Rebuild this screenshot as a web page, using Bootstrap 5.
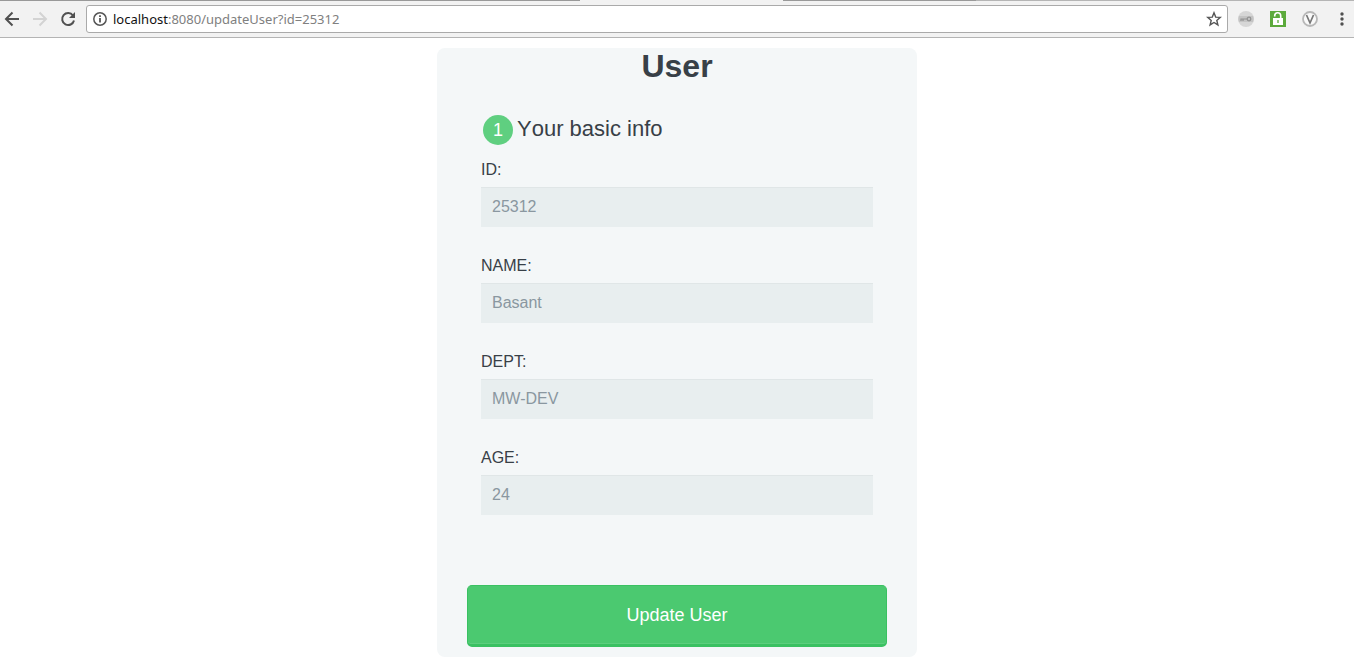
<!DOCTYPE html>
<html lang="en">
<head>
<meta charset="utf-8">
<meta name="viewport" content="width=device-width, initial-scale=1">
<title>User</title>
<link href="https://cdn.jsdelivr.net/npm/bootstrap@5.3.0/dist/css/bootstrap.min.css" rel="stylesheet">
<style>
  body { font-family: "Liberation Sans", Arial, sans-serif; color: #384047; }
  .browser-bar { height: 38px; padding: 0 4px; background: linear-gradient(90deg, #999 42.8%, #f2f2f2 42.8% 57.8%, #999 57.8% 72.1%, #b5b5b5 72.1%) top / 100% 1px no-repeat #f2f2f2; border-bottom: 1px solid #b4b4b4; }
  .tool-btn { width: 16px; height: 16px; }
  .tool-btn svg, .omnibox svg { display: block; }
  .omnibox { height: 28px; margin-left: 10px; padding: 0 5px; border: 1px solid #aaa; border-radius: 3px; }
  .address { margin-left: 5px; font: 13px/18px "Noto Sans", "Open Sans", sans-serif; color: #808080; }
  .address b { font-weight: 400; color: #111; }
  .extensions { gap: 16px; margin-left: 10px; }
  .user-form { max-width: 480px; margin: 10px auto; padding: 0 30px 10px; background: #f4f7f8; border-radius: 8px; }
  .user-form h1 { margin: 0 0 31px; font-size: 32px; line-height: 36px; font-weight: 700; text-align: center; }
  .user-form fieldset { padding: 0 14px; margin-bottom: 40px; }
  .user-form legend { margin: 0 0 16px; padding: 0 2px; font-size: 22px; line-height: 30px; font-kerning: none; }
  .step-no { width: 30px; height: 30px; margin-right: 4px; background: #5fcf80; color: #fff; font-size: 18px; border-radius: 50%; }
  .step-title { line-height: 28px; }
  .user-form label { display: block; margin-bottom: 8px; font-size: 16px; line-height: 18px; }
  .user-form .form-control { height: 40px; margin-bottom: 30px; padding: 0 11px; border: 0; border-radius: 0; background: #e8eeef; color: #8a97a0; font-size: 16px; box-shadow: 0 1px 0 rgba(0,0,0,.03) inset; }
  .user-form .btn { padding: 19px 39px 18px; border: 1px solid #3ac162; border-bottom-width: 3px; border-radius: 5px; background: #4bc970; color: #fff; font-size: 18px; line-height: 21px; box-shadow: 0 -1px 0 rgba(255,255,255,.1) inset; }
</style>
</head>
<body class="bg-white">
<header class="browser-bar d-flex align-items-center">
  <div class="d-flex" style="gap:12px">
    <button class="tool-btn border-0 bg-transparent p-0" aria-label="Back"><svg width="16" height="16" fill="none" stroke="#505050" stroke-width="2"><path d="M15 8H2.500M8.500 1.500 2 8l6.500 6.500"/></svg></button>
    <button class="tool-btn border-0 bg-transparent p-0" aria-label="Forward" disabled><svg width="16" height="16" fill="none" stroke="#d3d3d3" stroke-width="2"><path d="M1 8h12.500M7.500 1.500 14 8l-6.500 6.500"/></svg></button>
    <button class="tool-btn border-0 bg-transparent p-0" aria-label="Reload"><svg width="16" height="16" fill="none" stroke="#505050" stroke-width="2"><path d="M13 4.500A6 6 0 1 0 14 9.500"/><path d="M15 1v6H9z" fill="#505050" stroke="none"/></svg></button>
  </div>
  <div class="omnibox d-flex flex-fill align-items-center bg-white">
    <svg width="16" height="16" fill="none" stroke="#555" stroke-width="1.500"><circle cx="8" cy="8" r="6.200"/><path d="M8 7v4.500M8 4.300V6" stroke-width="1.800"/></svg>
    <span class="address flex-fill"><b>localhost</b>:8080/updateUser?id=25312</span>
    <button class="tool-btn border-0 bg-transparent p-0" aria-label="Bookmark"><svg width="16" height="16" fill="none" stroke="#555" stroke-width="1.400"><path d="m8 1.800 1.700 4.300 4.600.3-3.500 3 1.100 4.500L8 11.500l-3.900 2.400 1.100-4.500-3.500-3 4.600-.3z"/></svg></button>
  </div>
  <div class="extensions d-flex align-items-center">
    <button class="tool-btn border-0 bg-transparent p-0" aria-label="Password manager"><svg width="16" height="16" fill="none"><circle cx="8" cy="8" r="8" fill="#d6d6d6"/><path d="M1 5h14a8 8 0 0 1 0 6H1a8 8 0 0 1 0-6z" fill="#c4c4c4"/><circle cx="11" cy="8" r="1.800" stroke="#929292" stroke-width="1.300"/><path d="M9 8H3v2M5 8v2" stroke="#929292" stroke-width="1.200"/></svg></button>
    <button class="tool-btn border-0 bg-transparent p-0" aria-label="Secure lock"><svg width="16" height="16" fill="none"><path fill="#5caa3c" d="M0 0h16v16H0z"/><path d="M4.700 5.500V4.800a3 3 0 0 1 6 0V8" stroke="#fff" stroke-width="1.600"/><path fill="#fff" d="M3 7h10v7H3z"/><path d="M8 9v3" stroke="#5caa3c" stroke-width="1.300"/></svg></button>
    <button class="tool-btn border-0 bg-transparent p-0" aria-label="V extension"><svg width="16" height="16" fill="none"><circle cx="8" cy="8" r="7" fill="#fafafa" stroke="#b8b8b8" stroke-width="1.800"/><path d="m4.500 4 3.500 8 3.500-8" stroke="#777" stroke-width="1.700"/></svg></button>
    <button class="tool-btn border-0 bg-transparent p-0" aria-label="Menu"><svg width="16" height="16" fill="#505050"><circle cx="8" cy="3" r="1.700"/><circle cx="8" cy="8" r="1.700"/><circle cx="8" cy="13" r="1.700"/></svg></button>
  </div>
</header>
<main>
  <form class="user-form" onsubmit="return false">
    <h1>User</h1>
    <fieldset>
      <legend class="d-flex"><span class="step-no d-inline-flex align-items-center justify-content-center">1</span><span class="step-title">Your basic info</span></legend>
      <label for="uid">ID:</label>
      <input class="form-control" type="text" id="uid" value="25312">
      <label for="uname">NAME:</label>
      <input class="form-control" type="text" id="uname" value="Basant">
      <label for="dept">DEPT:</label>
      <input class="form-control" type="text" id="dept" value="MW-DEV">
      <label for="age">AGE:</label>
      <input class="form-control" type="text" id="age" value="24">
    </fieldset>
    <button class="btn w-100" type="submit">Update User</button>
  </form>
</main>
<script src="https://cdn.jsdelivr.net/npm/bootstrap@5.3.0/dist/js/bootstrap.bundle.min.js"></script>
</body>
</html>
